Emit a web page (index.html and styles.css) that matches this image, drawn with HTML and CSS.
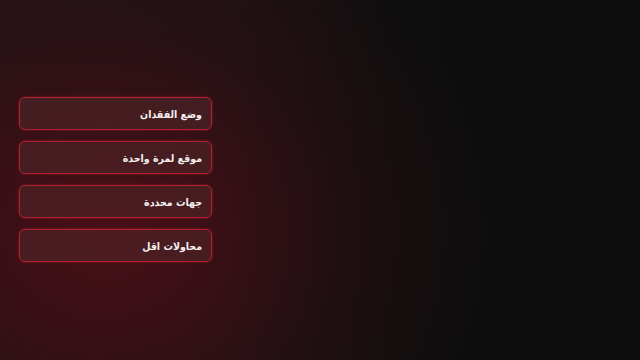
FILE: index.html
```html
<!DOCTYPE html>
<html lang="ar">
<head>
  <meta charset="UTF-8" />
  <meta name="viewport" content="width=device-width, initial-scale=1.0"/>
  <title>الخيارات</title>
  <link rel="stylesheet" href="styles.css">
</head>
<body>
  <div class="menu">
    <button class="option">وضع الفقدان</button>
    <button class="option">موقع لمرة واحدة</button>
    <button class="option">جهات محددة</button>
    <button class="option">محاولات اقل</button>
  </div>
</body>
</html>
```

FILE: styles.css
```css
* {
  box-sizing: border-box;
  font-family: "DejaVu Sans Condensed", "DejaVu Sans", sans-serif;
}

html, body {
  height: 100%;
}

body {
  margin: 0;
  padding: 97px 0 0 19px;
  background:
    radial-gradient(ellipse 380px 340px at 110px 230px, rgba(80, 14, 24, 0.85), rgba(48, 14, 19, 0.45) 60%, rgba(14, 14, 14, 0) 100%),
    linear-gradient(90deg, #241416 0%, #1d1314 35%, #0f0e0e 60%, #0c0c0c 100%);
}

.menu {
  width: 193px;
  display: flex;
  flex-direction: column;
  gap: 11px;
}

.option {
  height: 33px;
  padding: 0 9px;
  text-align: right;
  direction: rtl;
  color: #f4eeee;
  font-size: 10.5px;
  font-weight: bold;
  background: rgba(82, 40, 44, 0.55);
  border: 1px solid #b0222f;
  border-radius: 6px;
  box-shadow: 0 0 3px rgba(200, 30, 45, 0.55);
  cursor: pointer;
}
```
